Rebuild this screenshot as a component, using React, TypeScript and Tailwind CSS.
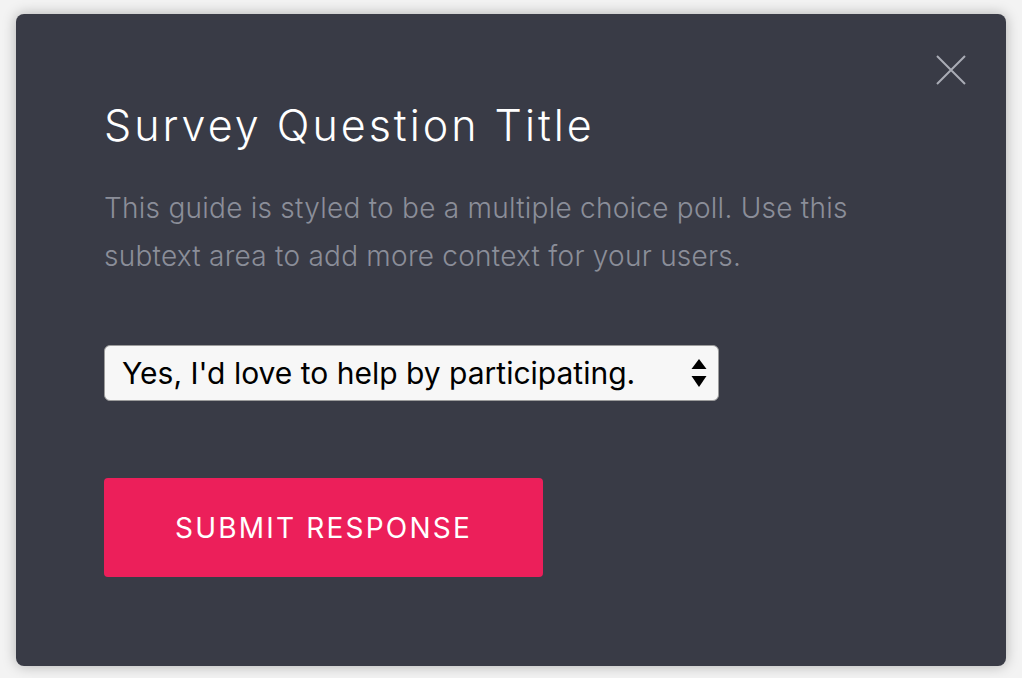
import React from 'react';

// Survey poll modal
const App: React.FC = () => {
  return (
    <div className="h-screen w-full bg-[#f3f3f3] px-[16px] pt-[14px] pb-[12px] font-['Inter',sans-serif]">
      <div className="relative h-full rounded-[8px] bg-[#393b46] shadow-[0_0_14px_rgba(0,0,0,0.28)]">
        {/* Close button */}
        <button className="absolute right-[40px] top-[41px] h-[30px] w-[30px]" aria-label="Close">
          <svg viewBox="0 0 30 30" className="h-[30px] w-[30px]">
            <path d="M1 1 L29 29 M29 1 L1 29" stroke="#a9acb5" strokeWidth="2" fill="none" />
          </svg>
        </button>

        <div className="flex flex-col items-start pl-[88px] pt-[83px]">
          <h1 className="text-[43px] leading-[56px] font-light tracking-[3px] text-white">
            Survey Question Title
          </h1>
          <p className="mt-[31px] w-[760px] text-[28px] leading-[48px] font-light tracking-[0.25px] text-[#8b8e99]">
            This guide is styled to be a multiple choice poll. Use this subtext area to add more context for your users.
          </p>

          {/* Select */}
          <div className="mt-[65px] flex h-[56px] w-[615px] items-center justify-between rounded-[6px] border-[1.5px] border-[#9c9c9c] bg-[#f7f7f7] pl-[17px] pr-[11px]">
            <span className="text-[30px] text-black">Yes, I'd love to help by participating.</span>
            <svg viewBox="0 0 16 28" className="h-[28px] w-[16px]">
              <path d="M8 0 L15.5 10 L0.5 10 Z" fill="#000" />
              <path d="M0.5 17 L15.5 17 L8 28 Z" fill="#000" />
            </svg>
          </div>

          <button className="mt-[77px] flex h-[99px] w-[439px] items-center justify-center rounded-[4px] bg-[#ec1f5a] text-[28px] uppercase tracking-[2.2px] text-white">
            Submit Response
          </button>
        </div>
      </div>
    </div>
  );
};

export default App;
